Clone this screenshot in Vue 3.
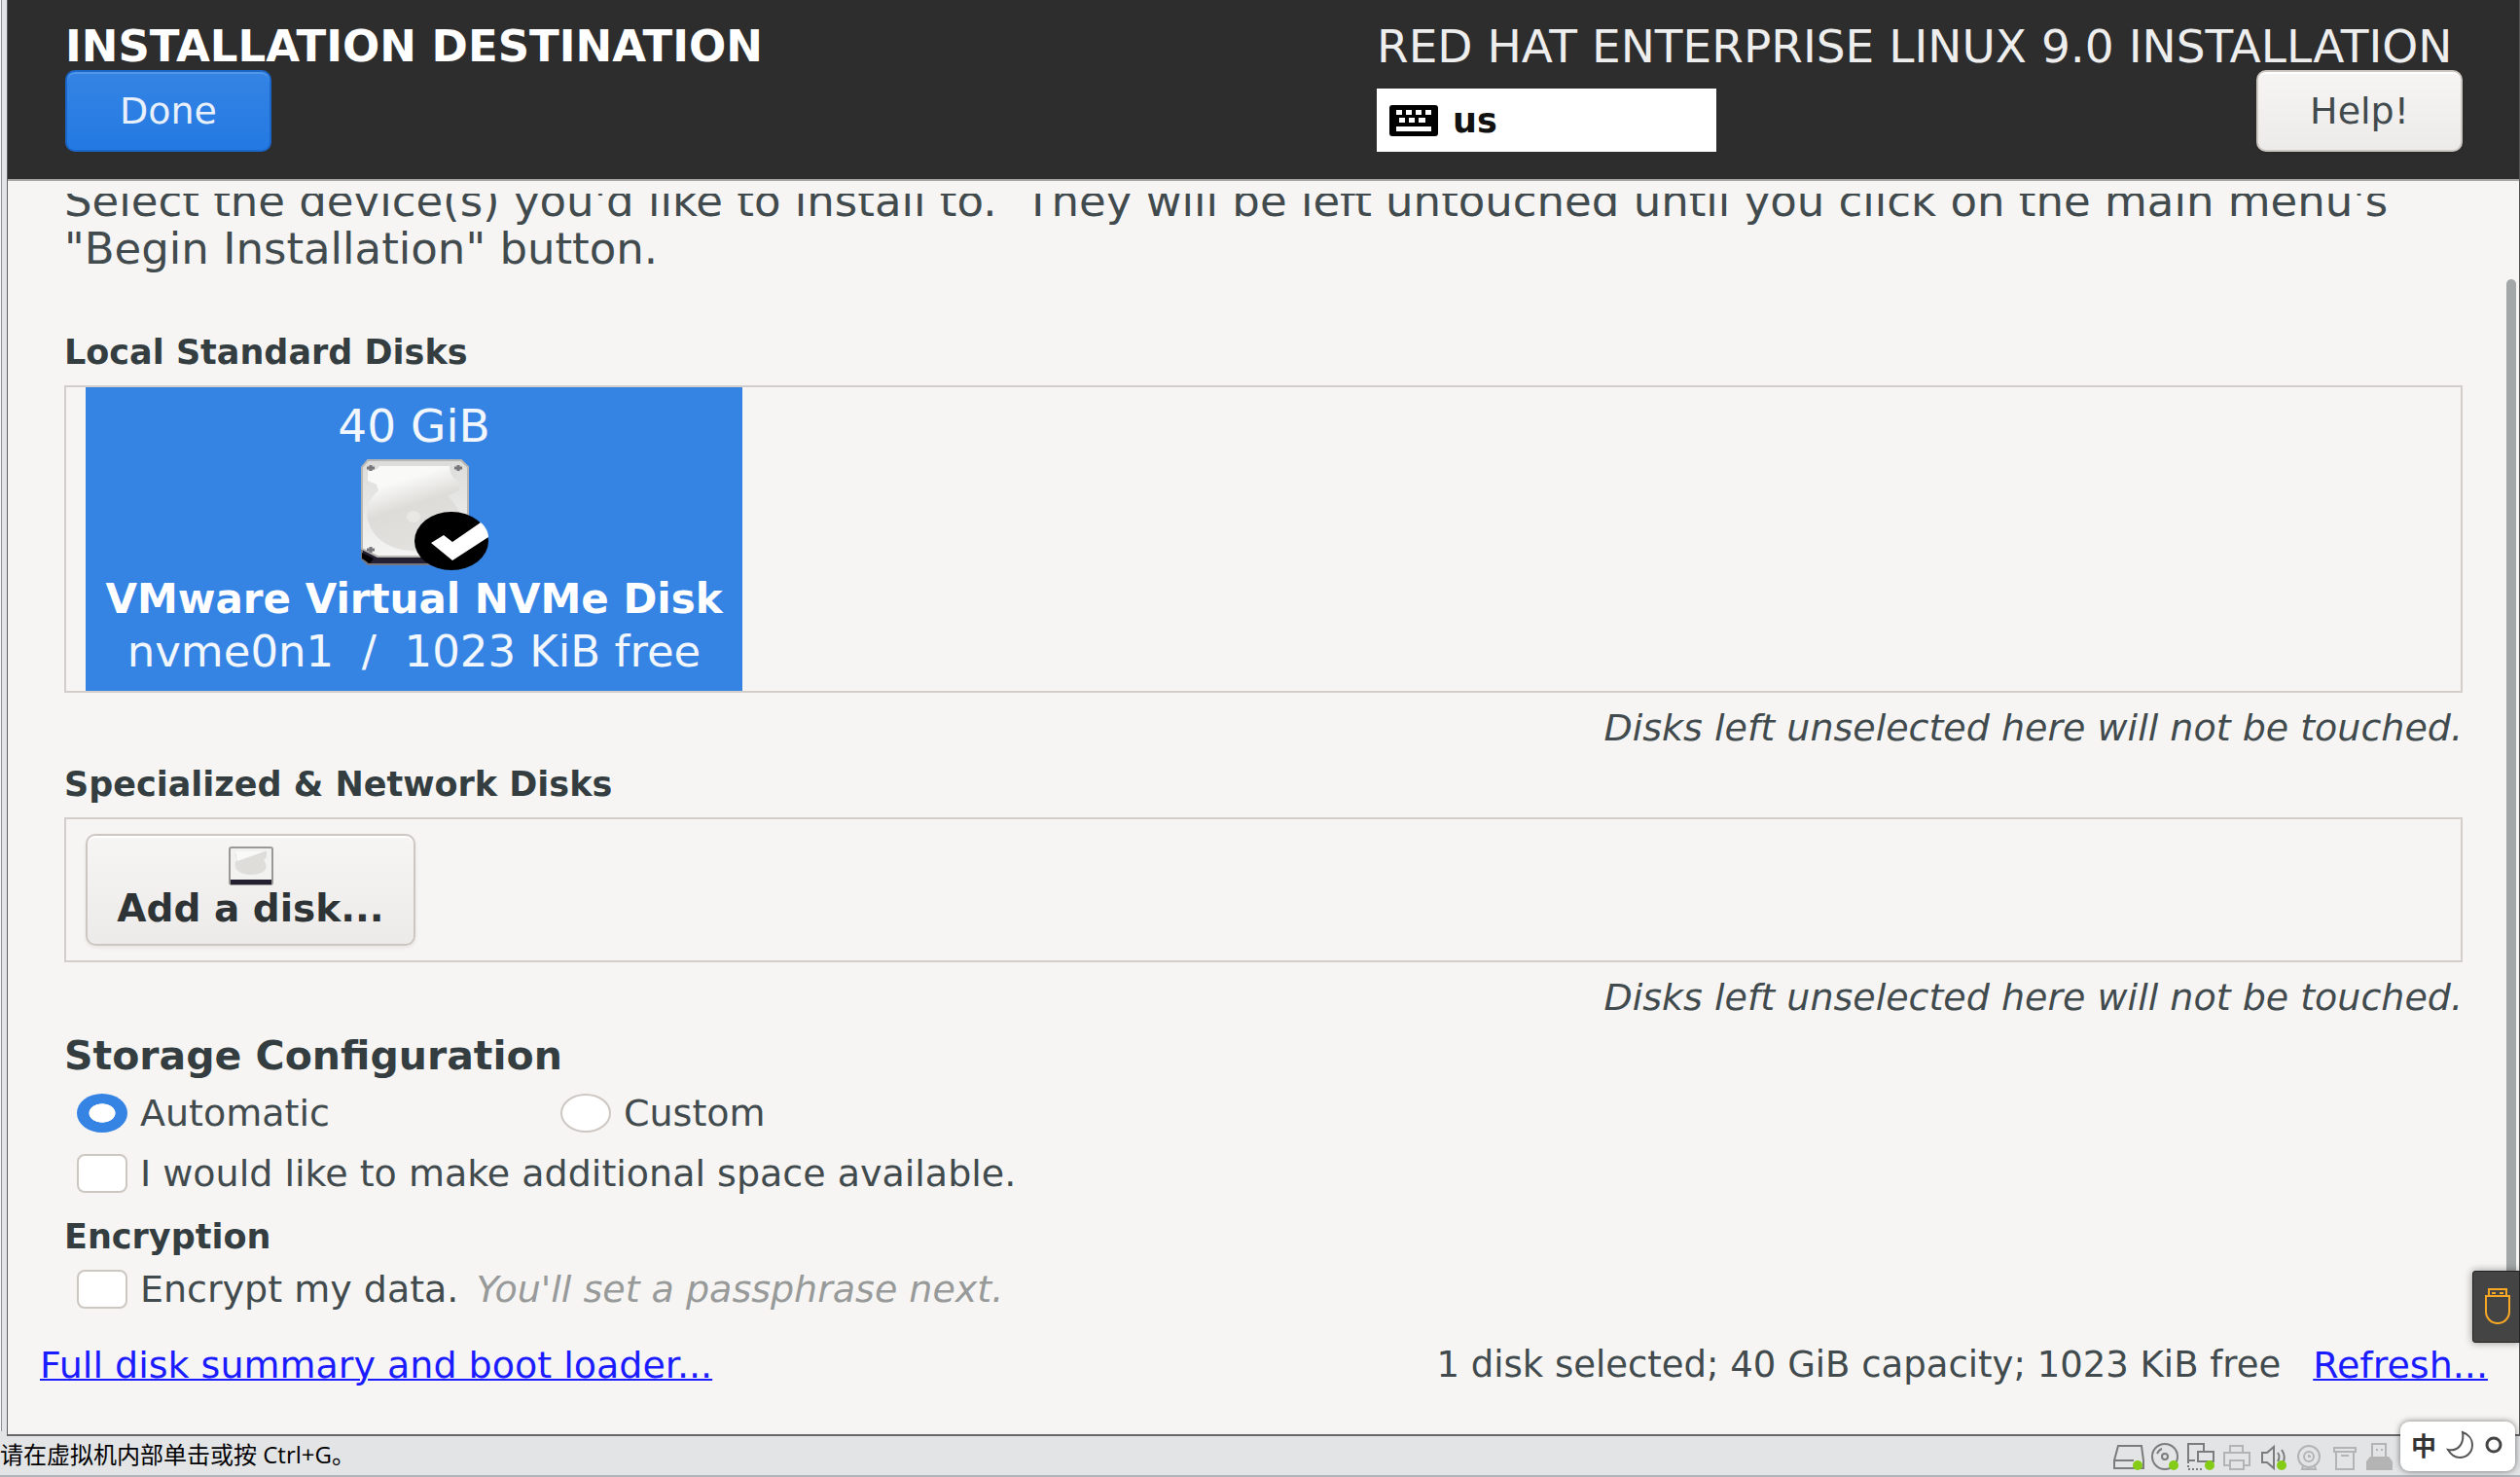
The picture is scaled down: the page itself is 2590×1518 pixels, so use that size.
<script setup>
import { ref } from 'vue'

const intro = `Select the device(s) you'd like to install to.  They will be left untouched until you click on the main menu's
"Begin Installation" button.`
const note = 'Disks left unselected here will not be touched.'
const partitioning = ref('automatic')
const reclaim = ref(false)
const encrypt = ref(false)
</script>

<template>
  <div class="host">
    <div class="gutter"><i></i></div>
    <div class="screen">
      <header class="bar">
        <div class="bar-left">
          <h1 class="title">INSTALLATION DESTINATION</h1>
          <button class="btn primary" type="button">Done</button>
        </div>
        <div class="bar-right">
          <p class="product">RED HAT ENTERPRISE LINUX 9.0 INSTALLATION</p>
          <div class="bar-tools">
            <button class="layout" type="button">
              <svg width="50" height="32" viewBox="0 0 50 32">
                <rect width="50" height="32" rx="3" fill="#000" />
                <path fill="#fff" d="M7 5h6v5H7zM17 5h6v5h-6zM27 5h6v5h-6zM37 5h6v5h-6zM10 13h6v5h-6zM20 13h6v5h-6zM30 13h7v5h-7zM7 22h36v5H7z" />
              </svg>
              <span>us</span>
            </button>
            <button class="btn" type="button">Help!</button>
          </div>
        </div>
      </header>

      <main class="content">
        <p class="intro">{{ intro }}</p>

        <h2 class="group">Local Standard Disks</h2>
        <div class="well">
          <button class="disk" type="button" aria-pressed="true">
            <span class="big size">40 GiB</span>
            <svg class="drive" width="112" height="110" viewBox="0 0 112 110">
              <defs>
                <linearGradient id="case" x1="0" y1="0" x2="0" y2="1">
                  <stop offset="0" stop-color="#dcdcda" />
                  <stop offset="1" stop-color="#f4f4f3" />
                </linearGradient>
                <linearGradient id="plate" x1="0.2" y1="0" x2="0.55" y2="1">
                  <stop offset="0.2" stop-color="#f9f9f8" />
                  <stop offset="0.5" stop-color="#dddcd8" />
                  <stop offset="1" stop-color="#e2e1de" />
                </linearGradient>
              </defs>
              <path d="M2 92h108v10l-6 6H8l-6-6z" fill="#241f31" stroke="#77767b" stroke-width="2" />
              <path d="M2 96l12 6-4 5-8-5z" fill="#000" />
              <path d="M8 1h96l7 7v85l-7 7H18L2 92V8z" fill="url(#case)" stroke="#b9b7b3" stroke-width="2" />
              <path d="M20 7h72c0 8 4 14 11 16l-1 9-12 6c9 8 14 17 14 29-4 18-20 27-49 27-26 0-46-15-48-38 0-9 4-16 12-24l-2-6-9-4V12c6 0 11-2 12-5z" fill="url(#plate)" />
              <ellipse cx="55" cy="59" rx="7" ry="6" fill="#e9e8e5" />
              <path d="M7 9h8M11 6v6M97 9h8M101 6v6M7 93h8M11 90v6" stroke="#77767b" stroke-width="3" />
              <ellipse cx="94" cy="84" rx="38" ry="30" fill="#000" />
              <path d="M73 86l13-8 9 7 29-20c5 4 8 10 8 15L95 104z" fill="#fff" />
            </svg>
            <span class="big name">VMware Virtual NVMe Disk</span>
            <span class="big free">nvme0n1&nbsp; /&nbsp; 1023 KiB free</span>
          </button>
        </div>
        <p class="note">{{ note }}</p>

        <h2 class="group">Specialized &amp; Network Disks</h2>
        <div class="well padded">
          <button class="btn add" type="button">
            <svg width="46" height="40" viewBox="0 0 46 40">
              <rect x="1" y="1" width="44" height="38" rx="2" fill="#f2f2f0" stroke="#9a9996" stroke-width="2" />
              <path d="M7 5h32v6l-3 3c5 7 4 14-13 15C8 29 3 20 9 13l-2-3z" fill="#deddda" />
              <path d="M7 5h30L9 15z" fill="#f9f9f8" />
              <path d="M2 34h42v5H2z" fill="#241f31" />
            </svg>
            <span>Add a disk...</span>
          </button>
        </div>
        <p class="note">{{ note }}</p>

        <h2 class="storage">Storage Configuration</h2>
        <div class="row radios">
          <label class="choice"><input v-model="partitioning" type="radio" name="partitioning" value="automatic" />Automatic</label>
          <label class="choice"><input v-model="partitioning" type="radio" name="partitioning" value="custom" />Custom</label>
        </div>
        <div class="row space">
          <label class="choice"><input v-model="reclaim" type="checkbox" />I would like to make additional space available.</label>
        </div>
        <h2 class="group encryption">Encryption</h2>
        <div class="row secure">
          <label class="choice"><input v-model="encrypt" type="checkbox" />Encrypt my data.</label>
          <em class="hint">You'll set a passphrase next.</em>
        </div>
      </main>

      <footer class="summary">
        <a href="#summary">Full disk summary and boot loader...</a>
        <span class="totals">1 disk selected; 40 GiB capacity; 1023 KiB free</span>
        <a href="#refresh">Refresh...</a>
      </footer>
      <div class="scrollbar"></div>
      <div class="usb-tab">
        <svg width="28" height="40" viewBox="0 0 28 40" fill="none" stroke="#f9a825" stroke-width="2">
          <path d="M5 8V2h18v6M2 9h24v16a12 12 0 0 1-24 0z" />
          <path d="M8 6h4M16 6h4" />
        </svg>
      </div>
    </div>

    <div class="status">
      <span class="tip">请在虚拟机内部单击或按 Ctrl+G。</span>
      <svg class="devices" width="292" height="30" viewBox="0 0 292 30" fill="none" stroke-width="2">
        <g stroke="#7c7c7c">
          <path d="M6 4h24l2 15v8H2v-8zM2 19h20" />
          <circle cx="54" cy="15" r="13" /><circle cx="54" cy="15" r="3" /><path d="M46 12q2-4 5-5" />
          <path d="M85 19h-7V2h16v8M88 20V10h16v10z" />
          <path d="M78 20v8h16" stroke-dasharray="2 2" />
          <path d="M154 11h5l7-6v22l-7-6h-5zM170 11q3 4 0 9M174 8q5 7 1 14" />
        </g>
        <g stroke="#b4b4b4">
          <path d="M121 11V4h13v7M121 24h-6V11h26v13h-6M121 19h14v9h-14z" />
          <circle cx="202" cy="15" r="11" /><circle cx="202" cy="15" r="5" /><path d="M202 13v2h2M196 25l-1 3h14l-1-3" />
          <path d="M228 6h22v4h-22zM230 10v18h18V10M235 14h8" />
          <path d="M267 15V2h14v13M271 8h2M276 8h2" />
          <path d="M261 29v-9l4-5h19l4 5v9z" fill="#b4b4b4" stroke="none" />
        </g>
        <g fill="#84cc16">
          <circle cx="26" cy="24" r="5" /><circle cx="63" cy="24" r="5" /><circle cx="100" cy="24" r="5" /><circle cx="174" cy="24" r="5" />
        </g>
      </svg>
      <div class="ime">
        <span>中</span>
        <svg width="30" height="30" viewBox="0 0 30 30" fill="none" stroke="#555" stroke-width="2">
          <path d="M17 2c6 2 10 7 10 13 0 8-6 13-13 13-5 0-9-3-12-8 10 2 17-6 15-18z" />
        </svg>
        <svg width="18" height="18" viewBox="0 0 18 18" fill="none" stroke="#444" stroke-width="3">
          <circle cx="9" cy="9" r="7" />
        </svg>
      </div>
    </div>
  </div>
</template>

<style>
body {
  margin: 0;
  background: #e3e4e6;
}
</style>

<style scoped>
.host {
  display: grid;
  grid-template-columns: 8px 1fr;
  grid-template-rows: 1fr auto;
  min-height: 100vh;
  font-family: "DejaVu Sans", sans-serif;
  font-size: 38px;
  line-height: 40px;
  color: #414a4d;
}
h1, h2, p {
  margin: 0;
}
button {
  font: inherit;
  color: inherit;
  padding: 0;
}
.gutter {
  box-sizing: border-box;
  border-right: 1px solid #5e5e62;
  background: #e3e4e6;
}
.gutter i {
  display: block;
  box-sizing: border-box;
  width: 2px;
  height: calc(100% - 5px);
  border-right: 1px solid #8d9095;
  background: #f5f6f7;
}
.screen {
  position: relative;
  display: flex;
  flex-direction: column;
  background: #f6f5f4;
  border-right: 1px solid #555;
  border-bottom: 2px solid #69666a;
}
.bar {
  display: flex;
  justify-content: space-between;
  box-sizing: border-box;
  height: 186px;
  padding: 28px 58px 0 59px;
  background: #2d2d2d;
  border-bottom: 2px solid #a5a5a4;
}
.bar-right {
  min-width: 1116px;
}
.title,
.product {
  margin-bottom: 4px;
  font-size: 45px;
  line-height: 40px;
  color: #fff;
  white-space: nowrap;
}
.product {
  font-size: 47px;
  color: #eee;
}
.bar-tools {
  display: flex;
  justify-content: space-between;
  align-items: flex-end;
}
.btn {
  box-sizing: border-box;
  min-width: 212px;
  height: 84px;
  border: 2px solid #cdc7c2;
  border-radius: 10px;
  background: linear-gradient(#f6f5f4, #edebe9);
  box-shadow: inset 0 2px #fff, 0 2px 4px #0001;
}
.btn.primary {
  color: #e8f0fb;
  border-color: #1b66c9;
  background: linear-gradient(#3584e4, #2379e2);
  box-shadow: inset 0 2px #5397e8;
}
.layout {
  display: flex;
  align-items: center;
  gap: 15px;
  width: 349px;
  height: 65px;
  padding-left: 13px;
  border: 0;
  background: #fff;
  color: #111;
  font-size: 35px;
  font-weight: bold;
}
.content {
  margin-top: 13px;
  padding: 0 58px 12px;
  overflow: hidden;
}
.intro {
  margin-top: -17px;
  font-size: 45px;
  line-height: 49px;
  white-space: pre;
}
.group {
  margin: 18px 0 14px;
  font-size: 35px;
  line-height: 40px;
  color: #343d40;
}
.intro + .group {
  margin-top: 62px;
}
.well {
  display: flex;
  padding-left: 20px;
  border: 2px solid #d3cec9;
}
.well.padded {
  padding: 15px 20px;
}
.disk {
  display: flex;
  flex-direction: column;
  align-items: center;
  width: 675px;
  padding: 18px 0;
  border: 0;
  background: #3584e4;
  color: #f2f7fd;
}
.big {
  font-size: 45px;
  line-height: 44px;
  white-space: nowrap;
}
.size {
  font-size: 47px;
}
.drive {
  margin: 12px 0;
  overflow: visible;
}
.name {
  color: #fff;
  font-size: 42px;
  font-weight: bold;
}
.free {
  margin-top: 10px;
}
.note {
  margin-top: 16px;
  font-style: italic;
  text-align: right;
}
.btn.add {
  display: flex;
  flex-direction: column;
  align-items: center;
  width: 339px;
  height: 115px;
  padding-top: 11px;
  font-size: 39px;
  line-height: 48px;
  font-weight: bold;
  color: #2e3436;
}
.storage {
  margin-top: 18px;
  font-size: 41px;
  line-height: 44px;
  color: #343d40;
}
.row {
  display: flex;
  margin-left: 13px;
}
.radios {
  display: grid;
  grid-template-columns: 497px auto;
  margin-top: 17px;
}
.space {
  margin-top: 22px;
}
.encryption {
  margin-top: 25px;
}
.secure {
  gap: 18px;
}
.choice {
  display: flex;
  align-items: center;
  gap: 13px;
  white-space: nowrap;
}
.choice input {
  appearance: none;
  box-sizing: border-box;
  width: 52px;
  height: 40px;
  margin: 0;
  border: 2px solid #cdc7c2;
  border-radius: 8px;
  background: #fff;
}
.choice input[type="radio"] {
  border-radius: 50%;
}
.choice input[type="radio"]:checked {
  border: 0;
  background: radial-gradient(ellipse 14px 10px, #fff 94%, #3584e4 100%);
}
.hint {
  color: #979a99;
}
.summary {
  display: flex;
  padding: 26px 32px 51px 33px;
  white-space: nowrap;
}
.summary a {
  color: #1b1bff;
  text-decoration-thickness: 2px;
}
.totals {
  margin-left: auto;
  margin-right: 33px;
  font-size: 37px;
}
.scrollbar {
  position: absolute;
  top: 287px;
  right: 3px;
  width: 10px;
  height: 1050px;
  border-radius: 5px;
  background: #a4a7a7;
}
.usb-tab {
  position: absolute;
  right: -1px;
  bottom: 94px;
  display: flex;
  align-items: center;
  justify-content: flex-end;
  box-sizing: border-box;
  width: 49px;
  height: 74px;
  padding-right: 8px;
  border: 1px solid #222;
  border-radius: 3px 0 0 3px;
  background: #444;
  box-shadow: 0 0 8px #0006;
}
.status {
  position: relative;
  grid-column: 1 / -1;
  display: flex;
  justify-content: space-between;
  box-sizing: border-box;
  height: 42px;
  padding-right: 127px;
  border-bottom: 2px solid #b0b5ba;
  background: #e3e4e6;
}
.tip {
  font-family: "Open Sans", "Noto Sans CJK SC", sans-serif;
  font-size: 24px;
  line-height: 38px;
  color: #000;
}
.devices {
  margin-top: 6px;
}
.ime {
  position: absolute;
  right: 5px;
  bottom: 4px;
  display: flex;
  align-items: center;
  justify-content: space-between;
  box-sizing: border-box;
  width: 118px;
  height: 51px;
  padding: 0 13px 3px 11px;
  border-radius: 9px;
  background: #fff;
  box-shadow: 0 0 6px #0008;
  font-family: "Noto Sans CJK SC", sans-serif;
  font-size: 26px;
  font-weight: bold;
  color: #333;
}
</style>
